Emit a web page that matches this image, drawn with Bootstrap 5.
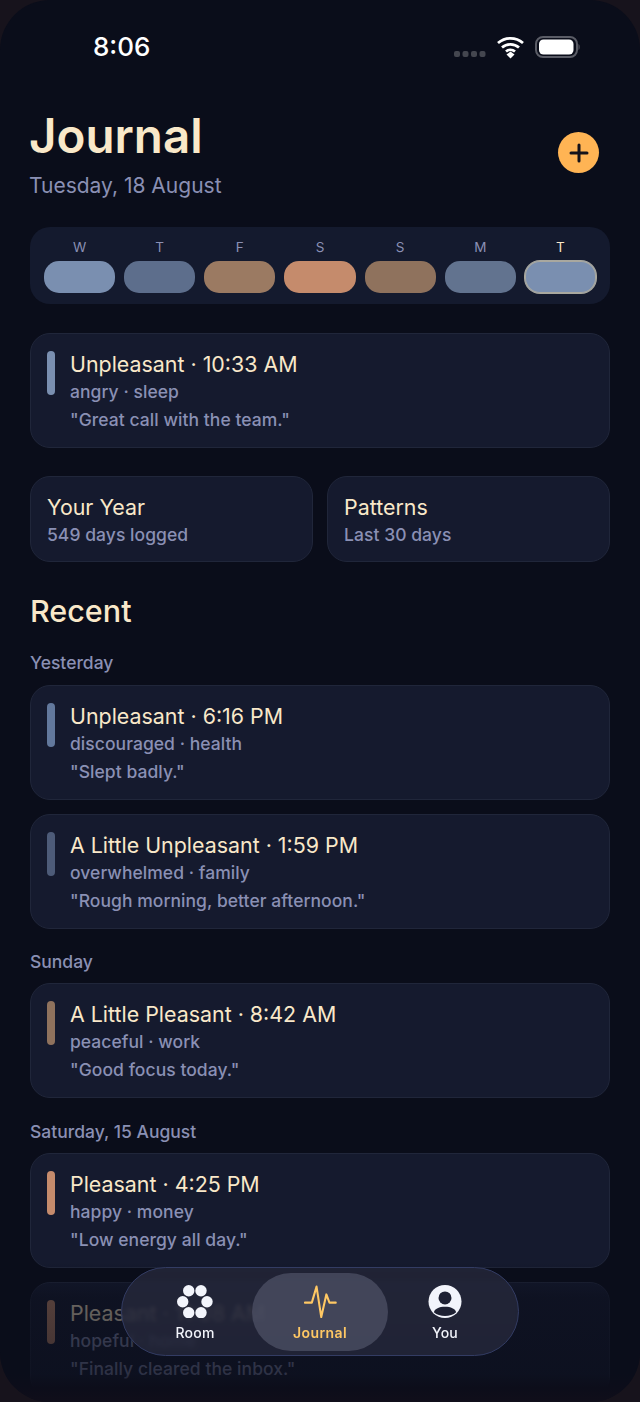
<!DOCTYPE html>
<html lang="en">
  <head>
    <meta charset="UTF-8" />
    <meta name="viewport" content="width=device-width, initial-scale=1.0" />
    <title>Journal</title>
    <link
      href="https://cdn.jsdelivr.net/npm/bootstrap@5.3.5/dist/css/bootstrap.min.css"
      rel="stylesheet"
    />
    <style>
      html,
      body {
        height: 100%;
      }

      body {
        background: #17131c;
        font-family: Inter, "Liberation Sans", sans-serif;
        overflow: hidden;
      }

      .phone {
        width: 640px;
        height: 1402px;
        background: #0a0d1a;
        border-radius: 50px;
        overflow: hidden;
      }

      .status-bar {
        height: 108px;
        padding: 33px 60px 0 93px;
      }

      .status-time {
        font-size: 26px;
        line-height: 28px;
        font-weight: 500;
        color: #fff;
      }

      .content {
        padding: 0 30px;
      }

      .page-title {
        font-size: 47.5px;
        line-height: 56px;
        font-weight: 600;
        color: #f9e8c9;
        margin: 0 0 0 -1px;
      }

      .page-date {
        font-size: 21px;
        line-height: 28px;
        color: #8a90b4;
        margin: 8px 0 0 -1px;
      }

      .add-btn {
        width: 41px;
        height: 41px;
        background: #ffb454;
        margin: 24px 11px 0 0;
      }

      .week-strip {
        height: 77px;
        margin-top: 27px;
        padding: 13px 14px 0;
        background: #141a2e;
        border-radius: 20px;
        gap: 9px;
      }

      .week-day {
        flex: 1 1 0;
      }

      .week-letter {
        font-size: 13.5px;
        line-height: 14px;
        text-align: center;
        color: #8a90b4;
        margin-bottom: 7px;
      }

      .week-pill {
        height: 32px;
        border-radius: 15px;
      }

      .today .week-letter {
        color: #f9e8c9;
      }

      .today .week-pill {
        box-shadow: 0 0 0 1px #a9a89f, inset 0 0 0 1px #a9a89f;
      }

      .entry-box {
        height: 115px;
        background: #151a2e;
        border: 1px solid #20263a;
        border-radius: 20px;
        padding: 17px 16px 0;
        gap: 15px;
      }

      .mood-bar {
        width: 8px;
        height: 44px;
        border-radius: 4px;
        flex-shrink: 0;
      }

      .entry-title {
        font-size: 21.4px;
        line-height: 27px;
        color: #f9e8c9;
      }

      .entry-line {
        font-size: 17.5px;
        line-height: 28px;
        font-weight: 500;
        letter-spacing: 0.05px;
        color: #8a90b4;
      }

      .today-entry {
        margin-top: 29px;
      }

      .link-row {
        margin-top: 28px;
        gap: 14px;
      }

      .link-box {
        flex: 1 1 0;
        height: 86px;
        background: #151a2e;
        border: 1px solid #20263a;
        border-radius: 20px;
        padding: 17px 16px 0;
      }

      .section-title {
        font-size: 30.5px;
        line-height: 36px;
        font-weight: 500;
        color: #f9e8c9;
        margin: 31px 0 0;
      }

      .day-label {
        font-size: 17.5px;
        line-height: 22px;
        font-weight: 500;
        color: #8a90b4;
        margin: 23px 0 11px;
      }

      .day-label-sunday {
        margin: 22px 0 10px;
      }

      .day-label-saturday {
        margin: 23px 0 10px;
      }

      .stack {
        gap: 14px;
      }

      .fade-out {
        position: absolute;
        left: 0;
        right: 0;
        top: 1262px;
        height: 140px;
        background: linear-gradient(rgba(10, 13, 26, 0), rgba(10, 13, 26, 0.6) 25%, rgba(10, 13, 26, 0.72) 80%, #0c0d1a 90%, #100e1a);
      }

      .tab-bar {
        position: absolute;
        left: 121px;
        top: 1267px;
        width: 398px;
        height: 89px;
        padding: 5px 16px;
        border: 1px solid #333c63;
        border-radius: 45px;
        background: rgba(38, 41, 60, 0.78);
        backdrop-filter: blur(2px);
      }

      .tab-item {
        flex: 1 1 0;
        height: 78px;
        border-radius: 39px;
        font-size: 14px;
        line-height: 18px;
        font-weight: 500;
        letter-spacing: 0.2px;
        color: #f2f4fb;
        padding-top: 12px;
      }

      .tab-item svg {
        margin-bottom: 6px;
      }

      .tab-active {
        flex: 0 0 136px;
        background: rgba(82, 86, 106, 0.68);
        color: #ffc864;
        font-weight: 600;
        letter-spacing: 0.4px;
      }
    </style>
  </head>

  <body>
    <div class="phone position-relative">
      <div class="status-bar d-flex justify-content-between">
        <div class="status-time">8:06</div>
        <svg width="128" height="28" viewBox="0 0 128 28" fill="none">
          <g fill="#44464f">
            <rect x="2" y="18" width="6" height="6" rx="2" />
            <rect x="10.500" y="18" width="6" height="6" rx="2" />
            <rect x="19" y="18" width="6" height="6" rx="2" />
            <rect x="27.500" y="18" width="6" height="6" rx="2" />
          </g>
          <path d="M46 10a19 19 0 0 1 25 0M50 14.500a13 13 0 0 1 17 0M54 18.500a7 7 0 0 1 9 0" stroke="#fff" stroke-width="2.800" />
          <path d="M54.500 21.500l4-3 4 3-4 4z" fill="#fff" />
          <rect x="84" y="4" width="41" height="20" rx="7" stroke="#5a5c66" stroke-width="2" />
          <rect x="87" y="6.500" width="34.500" height="15" rx="4.500" fill="#fff" />
          <path d="M126.500 11c1.500.5 1.500 5.500 0 6z" fill="#5a5c66" />
        </svg>
      </div>

      <div class="content">
        <div class="d-flex justify-content-between align-items-start">
          <div>
            <h1 class="page-title">Journal</h1>
            <div class="page-date">Tuesday, 18 August</div>
          </div>
          <div class="add-btn rounded-circle d-flex align-items-center justify-content-center">
            <svg width="22" height="22" viewBox="0 0 22 22">
              <path d="M11 3v16M3 11h16" stroke="#14121a" stroke-width="3" stroke-linecap="round" />
            </svg>
          </div>
        </div>

        <div class="week-strip d-flex">
          <div class="week-day"><div class="week-letter">W</div><div class="week-pill" style="background: #7a8fb0"></div></div>
          <div class="week-day"><div class="week-letter">T</div><div class="week-pill" style="background: #5d6e8c"></div></div>
          <div class="week-day"><div class="week-letter">F</div><div class="week-pill" style="background: #9b7a62"></div></div>
          <div class="week-day"><div class="week-letter">S</div><div class="week-pill" style="background: #c58b6c"></div></div>
          <div class="week-day"><div class="week-letter">S</div><div class="week-pill" style="background: #8f725d"></div></div>
          <div class="week-day"><div class="week-letter">M</div><div class="week-pill" style="background: #62738f"></div></div>
          <div class="week-day today"><div class="week-letter">T</div><div class="week-pill" style="background: #7a8fb0"></div></div>
        </div>

        <div class="entry-box today-entry d-flex">
          <div class="mood-bar" style="background: #7a8fb0"></div>
          <div>
            <div class="entry-title">Unpleasant · 10:33 AM</div>
            <div class="entry-line">angry · sleep</div>
            <div class="entry-line">"Great call with the team."</div>
          </div>
        </div>

        <div class="link-row d-flex">
          <div class="link-box">
            <div class="entry-title">Your Year</div>
            <div class="entry-line">549 days logged</div>
          </div>
          <div class="link-box">
            <div class="entry-title">Patterns</div>
            <div class="entry-line">Last 30 days</div>
          </div>
        </div>

        <h2 class="section-title">Recent</h2>

        <div class="day-label">Yesterday</div>
        <div class="stack d-flex flex-column">
          <div class="entry-box d-flex">
            <div class="mood-bar" style="background: #62789c"></div>
            <div>
              <div class="entry-title">Unpleasant · 6:16 PM</div>
              <div class="entry-line">discouraged · health</div>
              <div class="entry-line">"Slept badly."</div>
            </div>
          </div>
          <div class="entry-box d-flex">
            <div class="mood-bar" style="background: #4d5b78"></div>
            <div>
              <div class="entry-title">A Little Unpleasant · 1:59 PM</div>
              <div class="entry-line">overwhelmed · family</div>
              <div class="entry-line">"Rough morning, better afternoon."</div>
            </div>
          </div>
        </div>

        <div class="day-label day-label-sunday">Sunday</div>
        <div class="entry-box d-flex">
          <div class="mood-bar" style="background: #8f725d"></div>
          <div>
            <div class="entry-title">A Little Pleasant · 8:42 AM</div>
            <div class="entry-line">peaceful · work</div>
            <div class="entry-line">"Good focus today."</div>
          </div>
        </div>

        <div class="day-label day-label-saturday">Saturday, 15 August</div>
        <div class="stack d-flex flex-column">
          <div class="entry-box d-flex">
            <div class="mood-bar" style="background: #c58b6c"></div>
            <div>
              <div class="entry-title">Pleasant · 4:25 PM</div>
              <div class="entry-line">happy · money</div>
              <div class="entry-line">"Low energy all day."</div>
            </div>
          </div>
          <div class="entry-box d-flex">
            <div class="mood-bar" style="background: #c58b6c"></div>
            <div>
              <div class="entry-title">Pleasant · 11:08 AM</div>
              <div class="entry-line">hopeful · home</div>
              <div class="entry-line">"Finally cleared the inbox."</div>
            </div>
          </div>
        </div>
      </div>

      <div class="fade-out"></div>

      <nav class="tab-bar d-flex">
        <div class="tab-item d-flex flex-column align-items-center">
          <svg width="36" height="33" viewBox="0 0 36 33" fill="#f2f4fb">
            <circle cx="11.700" cy="5.700" r="5.700" />
            <circle cx="24" cy="5.700" r="5.700" />
            <circle cx="5.700" cy="16.700" r="5.700" />
            <circle cx="30" cy="16.700" r="5.700" />
            <circle cx="11.700" cy="27.700" r="5.700" />
            <circle cx="24" cy="27.700" r="5.700" />
          </svg>
          Room
        </div>
        <div class="tab-item tab-active d-flex flex-column align-items-center">
          <svg width="35" height="33" viewBox="0 0 35 35" fill="none">
            <path d="M1 18.700H8.300L13.300 1.700 18.300 34 23.700 10 27 18.700H33.700" stroke="#ffc864" stroke-width="2.200" stroke-linecap="round" stroke-linejoin="round" />
          </svg>
          Journal
        </div>
        <div class="tab-item d-flex flex-column align-items-center">
          <svg width="34" height="33" viewBox="0 0 34 34">
            <circle cx="17" cy="17" r="17" fill="#f2f4fb" />
            <circle cx="17" cy="13.300" r="6.700" fill="#1e2133" />
            <path d="M5.500 28c1-3.500 5.500-5.500 11.500-5.500S27.500 24.500 28.500 28c-3 2.500-7 4-11.500 4s-8.500-1.500-11.500-4z" fill="#1e2133" />
          </svg>
          You
        </div>
      </nav>
    </div>

    <script src="https://cdn.jsdelivr.net/npm/bootstrap@5.3.5/dist/js/bootstrap.bundle.min.js"></script>
  </body>
</html>
